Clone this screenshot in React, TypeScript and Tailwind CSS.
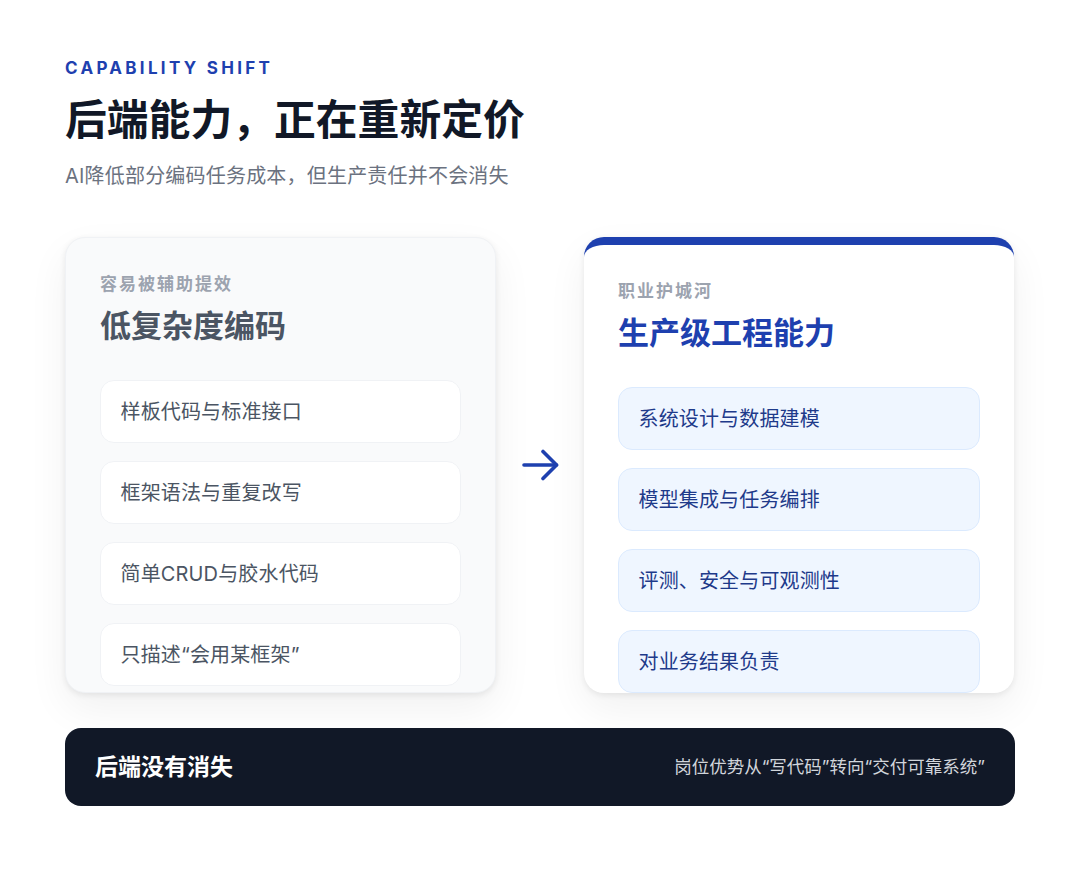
import React from 'react';

const fontStack = "font-['Inter','Noto_Sans_CJK_SC',sans-serif]";

const leftItems = ['样板代码与标准接口', '框架语法与重复改写', '简单CRUD与胶水代码', '只描述“会用某框架”'];
const rightItems = ['系统设计与数据建模', '模型集成与任务编排', '评测、安全与可观测性', '对业务结果负责'];

const App: React.FC = () => {
  return (
    <div className={`${fontStack} w-[1080px] h-[878px] bg-white overflow-hidden px-[65px] pt-[58px] flex flex-col`}>
      <p className="text-[17px] leading-[20px] font-bold tracking-[3.3px] text-[#1e40af]">CAPABILITY SHIFT</p>
      <h1 className="mt-[12px] text-[41.8px] leading-[60px] font-bold text-[#111827]">后端能力，正在重新定价</h1>
      <p className="mt-[12px] text-[20px] leading-[28px] tracking-[0.2px] text-[#6b7280]">AI降低部分编码任务成本，但生产责任并不会消失</p>

      <div className="mt-[47px] h-[456px] flex items-stretch">
        <section className="w-[431px] shrink-0 rounded-[20px] border border-[#f0f2f5] bg-[#f9fafb] px-[34px] pt-[34px] overflow-hidden shadow-[0_2px_6px_rgba(0,0,0,0.08),0_16px_40px_rgba(0,0,0,0.06)]">
          <p className="text-[17px] leading-[24px] font-bold tracking-[2px] text-[#9ca3af]">容易被辅助提效</p>
          <h2 className="mt-[8px] text-[31px] leading-[44px] font-bold text-[#4b5563]">低复杂度编码</h2>
          <ul className="mt-[32px] flex flex-col gap-[18px]">
            {leftItems.map((item) => (
              <li key={item} className="h-[63px] shrink-0 flex items-center px-[19.5px] rounded-[14px] border border-[#f0f2f5] bg-white text-[20px] tracking-[0.15px] text-[#4b5563]">
                {item}
              </li>
            ))}
          </ul>
        </section>

        <div className="w-[88px] shrink-0 flex items-center justify-center">
          <svg width="40" height="32" viewBox="0 0 40 32" fill="none" stroke="#1e40af" strokeWidth="3.6" strokeLinecap="round" strokeLinejoin="round">
            <path d="M4 16H36.5" />
            <path d="M23 2.5L36.5 16L23 29.5" />
          </svg>
        </div>

        <section className="w-[430px] shrink-0 rounded-[20px] border-t-[8px] border-[#1e40af] bg-white px-[34px] pt-[34px] overflow-hidden shadow-[0_2px_6px_rgba(0,0,0,0.08),0_16px_40px_rgba(0,0,0,0.06)]">
          <p className="text-[17px] leading-[24px] font-bold tracking-[2px] text-[#9ca3af]">职业护城河</p>
          <h2 className="mt-[8px] text-[31px] leading-[44px] font-bold text-[#1e40af]">生产级工程能力</h2>
          <ul className="mt-[32px] flex flex-col gap-[18px]">
            {rightItems.map((item) => (
              <li key={item} className="h-[63px] shrink-0 flex items-center px-[19.5px] rounded-[14px] border border-[#dbeafe] bg-[#eff6ff] text-[20px] tracking-[0.15px] text-[#1e3a8a]">
                {item}
              </li>
            ))}
          </ul>
        </section>
      </div>

      <footer className="mt-[35px] h-[78px] rounded-[16px] bg-[#111827] flex items-center justify-between px-[30px]">
        <span className="text-[23px] font-bold text-white">后端没有消失</span>
        <span className="text-[17.5px] text-[#d1d5db]">岗位优势从“写代码”转向“交付可靠系统”</span>
      </footer>
    </div>
  );
};

export default App;
